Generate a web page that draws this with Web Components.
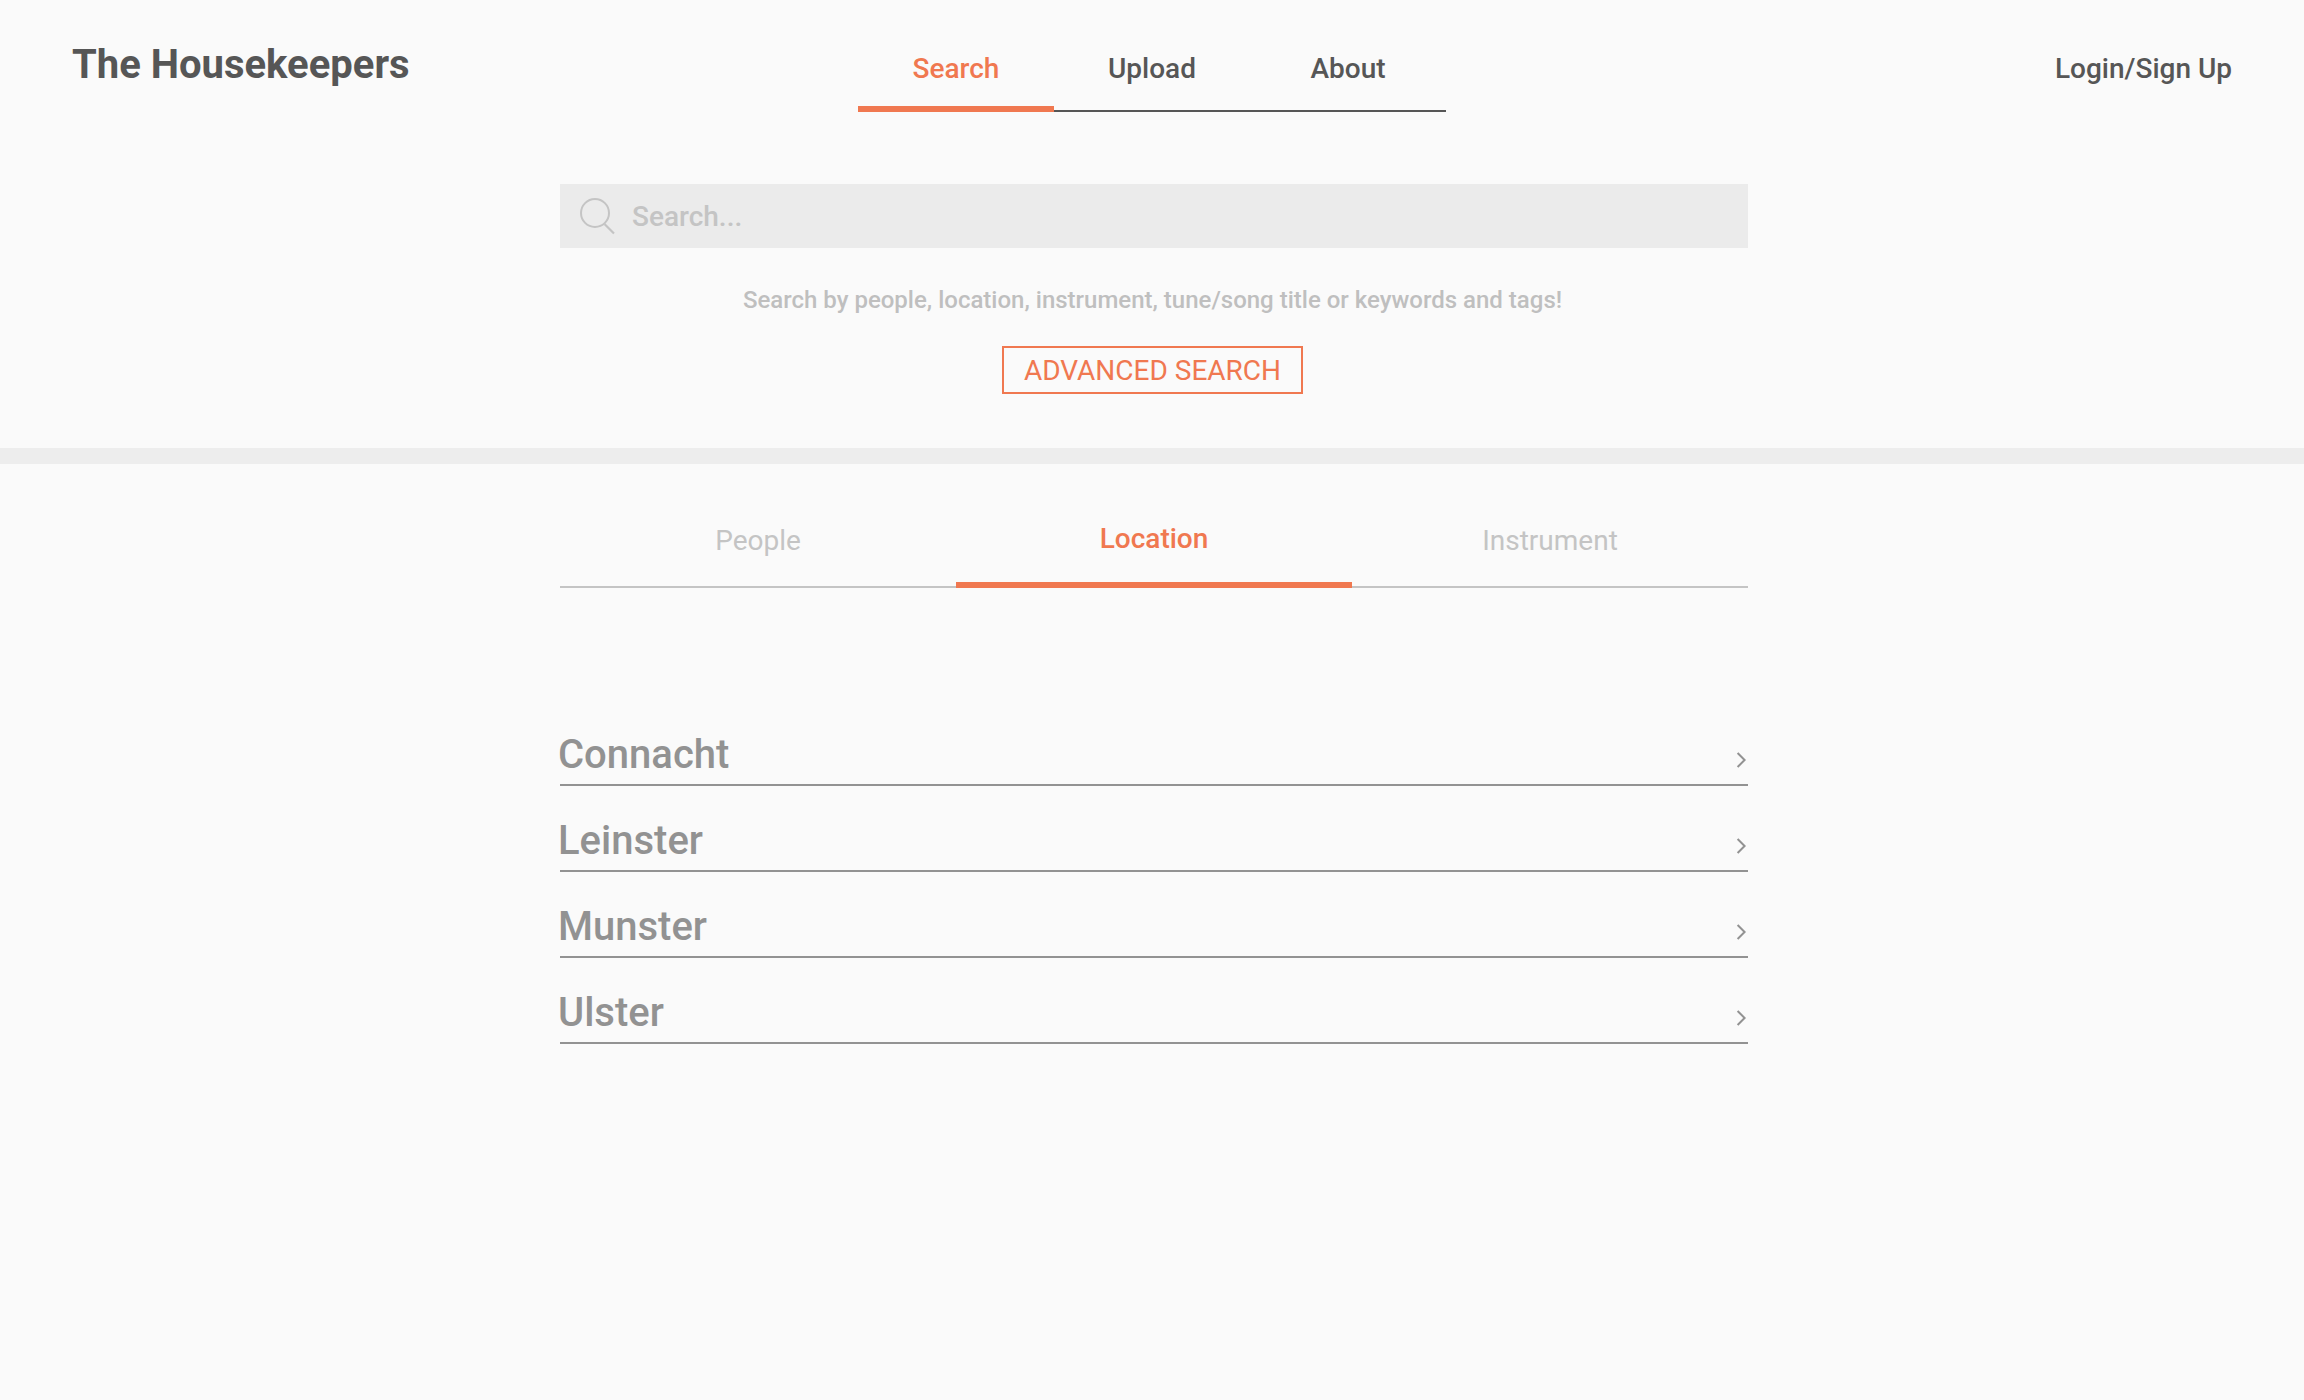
<!DOCTYPE html>
<html lang="en">
<head>
<meta charset="utf-8">
<meta name="viewport" content="width=device-width, initial-scale=1">
<title>The Housekeepers</title>
<style>
  :root {
    --ink: #565656;
    --accent: #f07850;
    --muted: #c4c4c4;
    --label: #929292;
    --field: #ebebeb;
    --band: #ededed;
  }
  body {
    margin: 0;
    background: #fafafa;
    color: var(--ink);
    font: 500 28px/32px Roboto, "Liberation Sans", sans-serif;
  }
</style>
</head>
<body>
<hk-app></hk-app>

<script>
  class HkElement extends HTMLElement {
    constructor() {
      super();
      this.attachShadow({ mode: "open" });
    }
    connectedCallback() {
      this.shadowRoot.innerHTML =
        `<style>*{box-sizing:border-box}:host{display:block}</style>${this.view()}`;
    }
  }

  class HkNavLink extends HkElement {
    view() {
      return `
        <style>
          :host { flex: 0 1 196px; display: flex; }
          a {
            flex: 1; text-align: center; text-decoration: none; color: var(--ink);
            padding-bottom: 25px; border-bottom: 2px solid var(--ink);
          }
          :host([active]) a {
            color: var(--accent); padding-bottom: 21px; border-bottom: 6px solid var(--accent);
          }
        </style>
        <a href="#"><slot></slot></a>`;
    }
  }

  class HkHeader extends HkElement {
    view() {
      return `
        <style>
          header {
            display: grid; grid-template-columns: 1fr minmax(0, 588px) 1fr;
            align-items: baseline; padding: 41px 72px 0;
          }
          a { color: inherit; text-decoration: none; }
          .brand { font-size: 40px; line-height: 48px; font-weight: 700; }
          .login { text-align: right; }
          nav { display: flex; }
        </style>
        <header>
          <a class="brand" href="#">The Housekeepers</a>
          <nav aria-label="Main">
            <hk-nav-link active>Search</hk-nav-link>
            <hk-nav-link>Upload</hk-nav-link>
            <hk-nav-link>About</hk-nav-link>
          </nav>
          <div class="login"><a href="#">Login/Sign Up</a></div>
        </header>`;
    }
  }

  class HkSearch extends HkElement {
    view() {
      return `
        <style>
          form { display: flex; flex-direction: column; align-items: center; }
          label {
            display: flex; align-items: center; gap: 16px; width: 100%; height: 64px;
            padding-left: 20px; background: var(--field); color: var(--muted);
          }
          svg { flex: none; }
          input {
            flex: 1; min-width: 0; border: 0; padding: 2px 0 0; background: none; outline: 0;
            font: inherit; color: var(--ink);
          }
          input::placeholder { color: var(--muted); opacity: 1; }
          p, button { margin-right: 3px; }
          p { margin-top: 38px; margin-bottom: 32px; font-size: 24px; line-height: 28px; color: #bfbfbf; }
          button {
            font: inherit; font-weight: 400; color: var(--accent); background: none;
            border: 2px solid var(--accent); padding: 7px 20px 5px; cursor: pointer;
          }
        </style>
        <form>
          <label>
            <svg width="36" height="38" viewBox="0 0 36 38" fill="none" stroke="currentColor" stroke-width="2" aria-hidden="true">
              <circle cx="15" cy="16" r="14"/>
              <path d="M24.5 27 L34 36.5" stroke-width="2.2"/>
            </svg>
            <input type="text" placeholder="Search..." aria-label="Search">
          </label>
          <p>Search by people, location, instrument, tune/song title or keywords and tags!</p>
          <button type="button">ADVANCED SEARCH</button>
        </form>`;
    }
  }

  class HkTab extends HkElement {
    view() {
      const on = this.hasAttribute("active");
      return `
        <style>
          :host { flex: 1; display: flex; }
          button {
            flex: 1; font: inherit; font-weight: 400; color: var(--muted); background: none;
            border: 0; border-bottom: 2px solid var(--muted); padding: 0 0 29px; cursor: pointer;
          }
          :host([active]) button {
            font-weight: 500; color: var(--accent);
            border-bottom: 6px solid var(--accent); padding-bottom: 27px;
          }
        </style>
        <button type="button" aria-pressed="${on}"><slot></slot></button>`;
    }
  }

  class HkTabs extends HkElement {
    view() {
      return `
        <style>div { display: flex; align-items: flex-end; }</style>
        <div role="group" aria-label="Browse by"><slot></slot></div>`;
    }
  }

  class HkRegion extends HkElement {
    view() {
      return `
        <style>
          a {
            display: flex; justify-content: space-between; align-items: flex-end;
            font-size: 40px; line-height: 48px; color: var(--label); text-decoration: none;
            padding-bottom: 5px; border-bottom: 2px solid var(--label);
          }
          span { margin-left: -2px; }
          svg { margin-bottom: 11px; }
        </style>
        <a href="#">
          <span><slot></slot></span>
          <svg width="12" height="16" viewBox="0 0 12 16" fill="none" stroke="currentColor" stroke-width="2" aria-hidden="true">
            <path d="M1.6 1 L8.6 8 L1.6 15"/>
          </svg>
        </a>`;
    }
  }

  class HkApp extends HkElement {
    view() {
      return `
        <style>
          .column { width: 100%; max-width: 1192px; margin: 0 auto; padding-left: 4px; }
          .search { padding-top: 72px; padding-bottom: 54px; }
          .band { height: 16px; margin: 0; border: 0; background: var(--band); }
          .browse { padding-top: 59px; }
          .regions { display: flex; flex-direction: column; gap: 31px; margin-top: 143px; }
        </style>
        <hk-header></hk-header>
        <main>
          <div class="column search"><hk-search></hk-search></div>
          <hr class="band">
          <div class="column browse">
            <hk-tabs>
              <hk-tab>People</hk-tab>
              <hk-tab active>Location</hk-tab>
              <hk-tab>Instrument</hk-tab>
            </hk-tabs>
            <div class="regions">
              <hk-region>Connacht</hk-region>
              <hk-region>Leinster</hk-region>
              <hk-region>Munster</hk-region>
              <hk-region>Ulster</hk-region>
            </div>
          </div>
        </main>`;
    }
  }

  customElements.define("hk-nav-link", HkNavLink);
  customElements.define("hk-header", HkHeader);
  customElements.define("hk-search", HkSearch);
  customElements.define("hk-tab", HkTab);
  customElements.define("hk-tabs", HkTabs);
  customElements.define("hk-region", HkRegion);
  customElements.define("hk-app", HkApp);
</script>
</body>
</html>
